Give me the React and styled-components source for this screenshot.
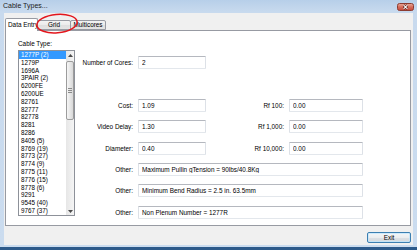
import React from "react";
import styled, { createGlobalStyle } from "styled-components";

const GlobalStyle = createGlobalStyle`
  html, body {
    margin: 0;
    padding: 0;
    background: #ffffff;
  }
  body {
    font-family: "Liberation Sans", Arial, sans-serif;
    overflow: hidden;
  }
`;

const cableTypes = [
  "1277P (2)",
  "1279P",
  "1696A",
  "3PAIR (2)",
  "6200FE",
  "6200UE",
  "82761",
  "82777",
  "82778",
  "8281",
  "8286",
  "8405 (5)",
  "8769 (19)",
  "8773 (27)",
  "8774 (9)",
  "8775 (11)",
  "8776 (15)",
  "8778 (6)",
  "9291",
  "9545 (40)",
  "9767 (37)",
];

const pairs = [
  { label: "Cost:", value: "1.09", rLabel: "Rf 100:", rValue: "0.00" },
  { label: "Video Delay:", value: "1.30", rLabel: "Rf 1,000:", rValue: "0.00" },
  { label: "Diameter:", value: "0.40", rLabel: "Rf 10,000:", rValue: "0.00" },
];

const others = [
  "Maximum Pullin gTension = 90lbs/40.8Kg",
  "Minimum Bend Radius = 2.5 in. 63.5mm",
  "Non Plenum Number = 1277R",
];

const App = () => {
  return (
    <>
      <GlobalStyle />
      <Window>
        <TitleBar>
          <Title>Cable Types...</Title>
          <CloseButton>
            <svg width="17" height="8" viewBox="0 0 17 8">
              <defs>
                <linearGradient id="closeGrad" x1="0" y1="0" x2="0" y2="1">
                  <stop offset="0" stopColor="#e9ab9c" />
                  <stop offset="0.5" stopColor="#d66d5b" />
                  <stop offset="1" stopColor="#c3473a" />
                </linearGradient>
              </defs>
              <rect x="0.5" y="0.5" width="16" height="7" rx="2" fill="url(#closeGrad)" stroke="#8c3c32" />
              <path d="M6.6 2.1 L10.4 5.9 M10.4 2.1 L6.6 5.9" stroke="#5a1e18" strokeWidth="2.2" />
              <path d="M6.6 2.1 L10.4 5.9 M10.4 2.1 L6.6 5.9" stroke="#ffffff" strokeWidth="1.1" />
            </svg>
          </CloseButton>
        </TitleBar>

        <Body>
          <TabStrip>
            <Tab $active $width={33} $align="left">
              Data Entry
            </Tab>
            <Tab $width={34}>Grid</Tab>
            <Tab $width={36}>Multicores</Tab>
            <Circle width="45" height="24" viewBox="0 0 45 24">
              <ellipse
                cx="22"
                cy="11.6"
                rx="20.2"
                ry="9.2"
                fill="none"
                stroke="#e3161d"
                strokeWidth="1.5"
                transform="rotate(-5 22 11.6)"
              />
            </Circle>
          </TabStrip>

          <Panel>
            <ListColumn>
              <ListLabel>Cable Type:</ListLabel>
              <ListBox>
                <Items>
                  {cableTypes.map((name, i) => (
                    <Item key={name} $selected={i === 0}>
                      {name}
                    </Item>
                  ))}
                </Items>
                <ScrollBar>
                  <ArrowButton>
                    <svg width="5" height="3" viewBox="0 0 5 3">
                      <path d="M0 3 L2.5 0 L5 3 Z" fill="#4a4a4a" />
                    </svg>
                  </ArrowButton>
                  <Track>
                    <Thumb>
                      <Grip />
                      <Grip />
                      <Grip />
                    </Thumb>
                  </Track>
                  <ArrowButton>
                    <svg width="5" height="3" viewBox="0 0 5 3">
                      <path d="M0 0 L2.5 3 L5 0 Z" fill="#4a4a4a" />
                    </svg>
                  </ArrowButton>
                </ScrollBar>
              </ListBox>
            </ListColumn>

            <Form>
              <Label>Number of Cores:</Label>
              <Field readOnly value="2" />
              <Spacer />
              {pairs.map((p) => (
                <React.Fragment key={p.label}>
                  <Label>{p.label}</Label>
                  <Field readOnly value={p.value} />
                  <Label>{p.rLabel}</Label>
                  <Field readOnly value={p.rValue} />
                </React.Fragment>
              ))}
              {others.map((text) => (
                <React.Fragment key={text}>
                  <Label>Other:</Label>
                  <Field readOnly value={text} $wide />
                </React.Fragment>
              ))}
            </Form>
          </Panel>

          <Footer>
            <ExitButton>Exit</ExitButton>
          </Footer>
        </Body>
      </Window>
    </>
  );
};

export default App;

const Window = styled.div`
  width: 417px;
  height: 250px;
  box-sizing: border-box;
  display: flex;
  flex-direction: column;
  background: linear-gradient(to bottom, #b7cfe9 0px, #c8daee 12px, #cbdcef 100%);
  padding-bottom: 2px;
  border-bottom: 3px solid #2d5a8a;
`;

const TitleBar = styled.div`
  height: 13px;
  flex: none;
  display: flex;
  justify-content: space-between;
  align-items: flex-start;
  padding: 0 3px;
`;

const Title = styled.span`
  font-size: 7px;
  line-height: 12px;
  color: #1b1b1b;
`;

const CloseButton = styled.div`
  margin-top: 3px;
  width: 17px;
  height: 8px;
  display: flex;
`;

const Body = styled.div`
  flex: 1;
  min-height: 0;
  margin: 0 4px;
  background: #f0f0f0;
  padding: 5px 2px 2px 1px;
  display: flex;
  flex-direction: column;
`;

const TabStrip = styled.div`
  position: relative;
  height: 12px;
  display: flex;
  align-items: flex-end;
  flex: none;
`;

const Tab = styled.div`
  box-sizing: border-box;
  position: relative;
  z-index: ${(p) => (p.$active ? 1 : 0)};
  width: ${(p) => p.$width}px;
  height: ${(p) => (p.$active ? 13 : 10)}px;
  margin-bottom: ${(p) => (p.$active ? -1 : 0)}px;
  margin-left: ${(p) => (p.$active ? 0 : -1)}px;
  border: 1px solid #979aa2;
  border-bottom: ${(p) => (p.$active ? "none" : "1px solid #979aa2")};
  border-radius: 2px 2px 0 0;
  background: ${(p) =>
    p.$active ? "#ffffff" : "linear-gradient(to bottom, #f3f3f3 0%, #ebebeb 50%, #dedede 51%, #e4e4e4 100%)"};
  font-size: 6.4px;
  line-height: ${(p) => (p.$active ? 11 : 8)}px;
  text-align: ${(p) => p.$align || "center"};
  padding-left: ${(p) => (p.$align === "left" ? 2 : 0)}px;
  color: #000;
  white-space: nowrap;
  overflow: hidden;
`;

const Circle = styled.svg`
  position: absolute;
  left: 30px;
  top: -6px;
  z-index: 2;
  pointer-events: none;
`;

const Panel = styled.div`
  box-sizing: border-box;
  height: 196px;
  flex: none;
  border: 1px solid #979aa2;
  background: #ffffff;
  display: flex;
  align-items: flex-start;
  padding: 9px 0 0 12px;
`;

const ListColumn = styled.div`
  width: 57px;
  display: flex;
  flex-direction: column;
`;

const ListLabel = styled.div`
  font-size: 6.4px;
  line-height: 8px;
  height: 8px;
  margin-bottom: 2px;
  color: #000;
  white-space: nowrap;
`;

const ListBox = styled.div`
  box-sizing: border-box;
  height: 166px;
  border: 1px solid #8d9199;
  background: #fff;
  display: flex;
`;

const Items = styled.div`
  flex: 1;
  min-width: 0;
  overflow: hidden;
`;

const Item = styled.div`
  height: 7.8px;
  line-height: 7.8px;
  font-size: 6.3px;
  padding-left: 2px;
  white-space: nowrap;
  color: ${(p) => (p.$selected ? "#ffffff" : "#000000")};
  background: ${(p) => (p.$selected ? "#3399ff" : "transparent")};
`;

const ScrollBar = styled.div`
  width: 8px;
  flex: none;
  display: flex;
  flex-direction: column;
  background: linear-gradient(to right, #e6e6e6, #f5f5f5);
`;

const ArrowButton = styled.div`
  height: 8px;
  flex: none;
  display: flex;
  align-items: center;
  justify-content: center;
`;

const Track = styled.div`
  flex: 1;
  padding-top: 2px;
`;

const Thumb = styled.div`
  box-sizing: border-box;
  height: 59px;
  border: 1px solid #9c9c9c;
  border-radius: 2px;
  background: linear-gradient(to right, #f6f6f6, #e4e4e4 60%, #d8d8d8);
  display: flex;
  flex-direction: column;
  align-items: center;
  justify-content: center;
  gap: 1px;
`;

const Grip = styled.div`
  width: 4px;
  height: 1px;
  background: #8a8a8a;
`;

const Form = styled.div`
  margin: 16px 0 0 6px;
  display: grid;
  grid-template-columns: 52px 68px 73px 74px;
  grid-auto-rows: 13px;
  column-gap: 5px;
  row-gap: 8.4px;
`;

const Spacer = styled.div`
  grid-column: 1 / -1;
  height: 9.2px;
`;

const Label = styled.div`
  font-size: 6.4px;
  line-height: 13px;
  text-align: right;
  color: #000;
  white-space: nowrap;
`;

const Field = styled.input`
  box-sizing: border-box;
  width: 100%;
  height: 13px;
  margin: 0;
  padding: 0 3px;
  border: 1px solid;
  border-color: #b5b8bf #dde1e7 #e3e7ec #dde1e7;
  border-radius: 1px;
  background: #fff;
  font-family: "Liberation Sans", Arial, sans-serif;
  font-size: 6.4px;
  color: #000;
  outline: none;
  grid-column: ${(p) => (p.$wide ? "2 / 5" : "auto")};
`;

const Footer = styled.div`
  display: flex;
  justify-content: flex-end;
  padding-top: 6px;
`;

const ExitButton = styled.button`
  box-sizing: border-box;
  width: 44px;
  height: 11px;
  padding: 0;
  border: 1px solid #3c7fb1;
  border-radius: 2px;
  background: linear-gradient(to bottom, #f4f6f8 0%, #ebedef 50%, #dde1e5 51%, #d3d8dd 100%);
  box-shadow: inset 0 0 0 1px rgba(190, 230, 253, 0.7);
  font-family: "Liberation Sans", Arial, sans-serif;
  font-size: 6.4px;
  line-height: 9px;
  color: #000;
`;
